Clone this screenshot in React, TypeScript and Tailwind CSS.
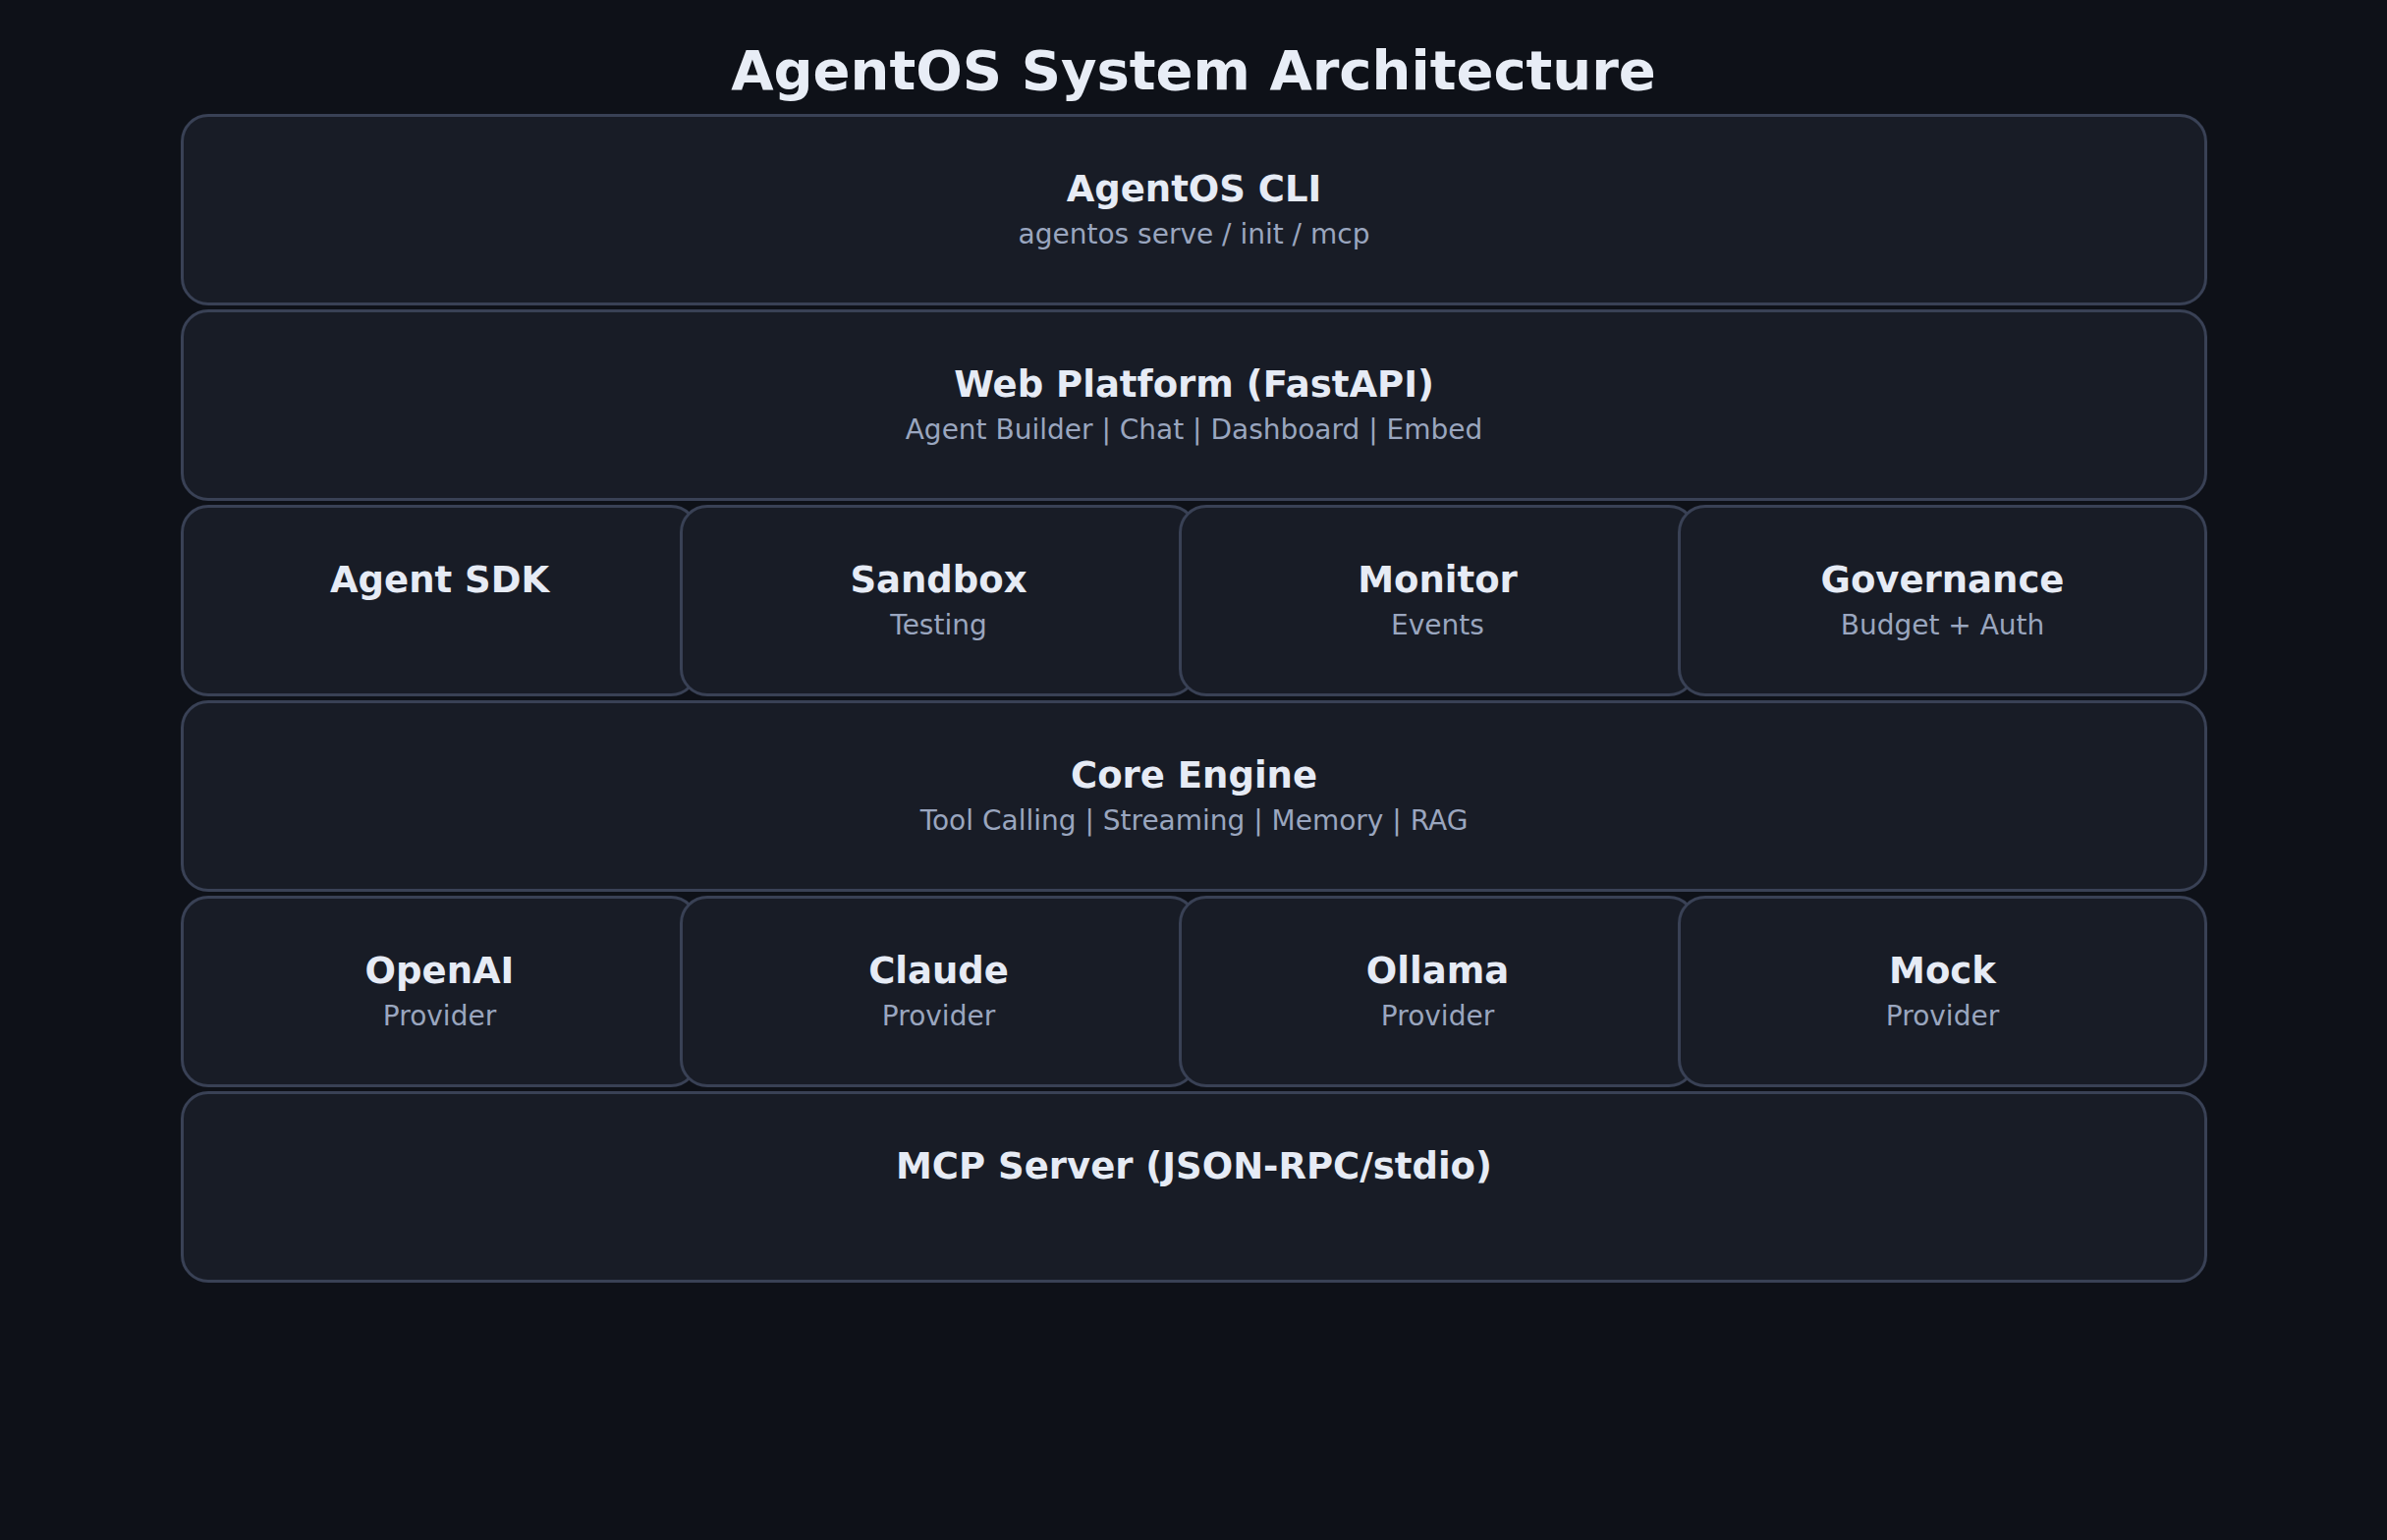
const font = { fontFamily: '"DejaVu Sans", sans-serif' }

function Box({ title, sub, className = '' }: { title: string; sub?: string; className?: string }) {
  return (
    <div
      className={`h-[195px] rounded-[28px] border-[3px] border-[#394155] bg-[#181c26] flex flex-col items-center pt-[52px] ${className}`}
    >
      <div className="text-[37px] leading-[44px] font-bold text-[#e6ebf5]">{title}</div>
      {sub && <div className="mt-[7px] text-[28px] leading-[34px] text-[#9aa6bf]">{sub}</div>}
    </div>
  )
}

function Row4({ items }: { items: [string, string?][] }) {
  return (
    <div className="flex">
      {items.map(([t, s], i) => (
        <Box
          key={t}
          title={t}
          sub={s}
          className={i === 3 ? 'flex-1 -ml-[19px]' : i === 0 ? 'w-[527px]' : 'w-[527px] -ml-[19px]'}
        />
      ))}
    </div>
  )
}

export default function App() {
  return (
    <div className="w-[2430px] h-[1568px] bg-[#0e1118]" style={font}>
      <div className="pt-[38px] text-center text-[56px] leading-[68px] font-bold text-[#e8edf6]">
        AgentOS System Architecture
      </div>
      <div className="ml-[184px] w-[2063px] mt-[10px] flex flex-col gap-[4px]">
        <Box title="AgentOS CLI" sub="agentos serve / init / mcp" />
        <Box title="Web Platform (FastAPI)" sub="Agent Builder | Chat | Dashboard | Embed" />
        <Row4 items={[['Agent SDK'], ['Sandbox', 'Testing'], ['Monitor', 'Events'], ['Governance', 'Budget + Auth']]} />
        <Box title="Core Engine" sub="Tool Calling | Streaming | Memory | RAG" />
        <Row4 items={[['OpenAI', 'Provider'], ['Claude', 'Provider'], ['Ollama', 'Provider'], ['Mock', 'Provider']]} />
        <Box title="MCP Server (JSON-RPC/stdio)" />
      </div>
    </div>
  )
}
